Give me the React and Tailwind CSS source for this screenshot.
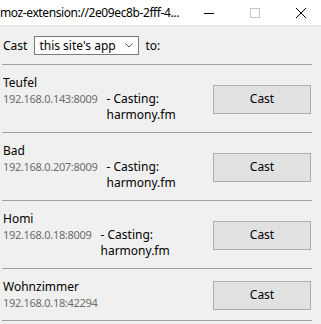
import React from "react";

const devices = [
  { name: "Teufel", ip: "192.168.0.143:8009", casting: "harmony.fm" },
  { name: "Bad", ip: "192.168.0.207:8009", casting: "harmony.fm" },
  { name: "Homi", ip: "192.168.0.18:8009", casting: "harmony.fm" },
  { name: "Wohnzimmer", ip: "192.168.0.18:42294", casting: null },
];

function Row({ d, last }) {
  return (
    <div
      className={
        "flex items-center border-t border-[#a0a0a0] pt-[10px] pb-[9px] pl-[1px] pr-[1px]" +
        (last ? " border-b" : "")
      }
    >
      <div className="flex-1 min-w-0 leading-[16px]">
        <div className="text-[12px] text-black">{d.name}</div>
        <div className="flex">
          <span className="text-[11px] text-[#6d6d6d] tracking-[-0.3px]">{d.ip}</span>
          {d.casting && (
            <div className="ml-[9px] text-[12px] text-black">
              <div>- Casting:</div>
              <div>{d.casting}</div>
            </div>
          )}
        </div>
      </div>
      <button className="w-[98px] h-[29px] bg-[#e1e1e1] border border-[#adadad] text-[12px] text-black shrink-0">
        Cast
      </button>
    </div>
  );
}

export default function App() {
  return (
    <div
      className="w-[321px] h-[324px] bg-[#f0f0f0] overflow-hidden"
      style={{ fontFamily: '"Segoe UI", "Noto Sans", sans-serif' }}
    >
      <div className="w-[324px] h-[26px] bg-white border-b border-[#e3e3e3] flex items-stretch">
        <div className="w-[186px] shrink-0 flex items-center text-[12px] tracking-[-0.4px] text-black whitespace-nowrap">
          moz-extension://2e09ec8b-2fff-4...
        </div>
        <div className="w-[46px] flex items-center justify-center shrink-0">
          <svg width="10" height="10" viewBox="0 0 10 10">
            <path d="M0 5.5H10" stroke="#000" strokeWidth="1" />
          </svg>
        </div>
        <div className="w-[46px] flex items-center justify-center shrink-0">
          <svg width="10" height="10" viewBox="0 0 10 10">
            <rect x="0.5" y="0.5" width="9" height="9" fill="none" stroke="#c7c7c7" strokeWidth="1" />
          </svg>
        </div>
        <div className="w-[46px] flex items-center justify-center shrink-0">
          <svg width="10" height="10" viewBox="0 0 10 10">
            <path d="M0 0L10 10M10 0L0 10" stroke="#000" strokeWidth="1" />
          </svg>
        </div>
      </div>

      <div className="flex items-center pl-[3px] pt-[10px] pb-[9px] text-[12px] text-black">
        <span>Cast</span>
        <div className="ml-[7px] w-[105px] h-[19px] bg-white border border-[#7a7a7a] flex items-center pl-[4px] pr-[5px]">
          <span className="flex-1 whitespace-nowrap">this site's app</span>
          <svg width="8" height="5" viewBox="0 0 8 5">
            <path d="M0.5 0.5L4 4L7.5 0.5" fill="none" stroke="#555" strokeWidth="1" />
          </svg>
        </div>
        <span className="ml-[6px]">to:</span>
      </div>

      <div className="ml-[2px] w-[310px]">
        {devices.map((d, i) => (
          <Row key={d.name} d={d} last={i === devices.length - 1} />
        ))}
      </div>
    </div>
  );
}
